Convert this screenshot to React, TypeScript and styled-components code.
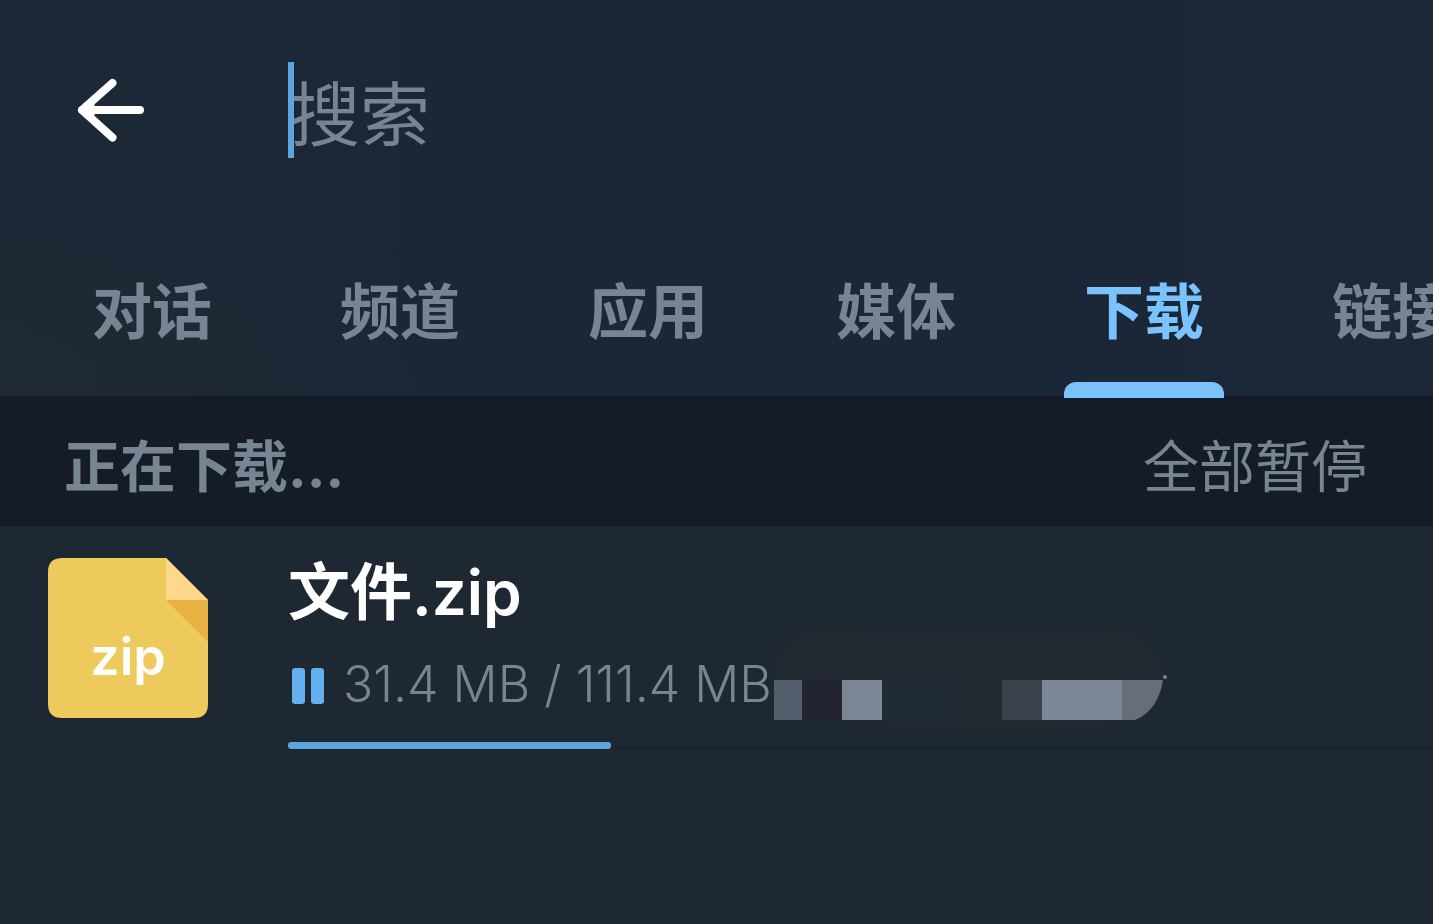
import React from "react";
import styled, { createGlobalStyle } from "styled-components";

const color = {
  page: "#1e2833",
  header: "#1b2737",
  section: "#151c27",
  muted: "#778592",
  accent: "#7ac3ff",
  progress: "#5ba6e0",
};

const GlobalStyle = createGlobalStyle`
  *, *::before, *::after { box-sizing: border-box; }
  body {
    margin: 0;
    background: ${color.page};
    font-family: Inter, "Noto Sans CJK SC", sans-serif;
    overflow-x: hidden;
  }
  button, input { font: inherit; border: 0; padding: 0; background: none; }
  button { cursor: pointer; }
`;

const Page = styled.div`
  min-height: 100vh;
  display: flex;
  flex-direction: column;
  background: ${color.page};
`;

const Header = styled.header`
  background:
    radial-gradient(ellipse 420px 180px at 0 100%, rgba(33, 42, 50, 0.7), transparent),
    linear-gradient(90deg, rgba(29, 41, 53, 0.7), transparent 40%, transparent 75%, rgba(29, 41, 54, 0.7)),
    ${color.header};
`;

const SearchBar = styled.div`
  display: flex;
  align-items: center;
  height: 220px;
  padding: 0 72px;
  gap: 136px;
`;

const BackButton = styled.button`
  display: flex;
  flex: none;
  color: #fff;
`;

const SearchField = styled.label`
  position: relative;
  flex: 1;
  display: flex;
  align-items: center;
  height: 96px;
`;

const Caret = styled.span`
  position: absolute;
  left: 0;
  top: 0;
  width: 6px;
  height: 100%;
  background: ${color.progress};
`;

const SearchInput = styled.input`
  width: 100%;
  height: 96px;
  padding-left: 2px;
  font-size: 70px;
  font-family: "Noto Sans CJK SC", sans-serif;
  font-weight: 400;
  color: #fff;
  outline: none;
  &::placeholder { color: ${color.muted}; opacity: 1; }
`;

const Tabs = styled.nav`
  display: flex;
  gap: 88px;
  height: 176px;
  padding-left: 72px;
  overflow-x: clip;
`;

const Tab = styled.button<{ $active: boolean }>`
  position: relative;
  flex: none;
  width: 160px;
  padding-bottom: 2px;
  font-family: "Noto Sans CJK SC", sans-serif;
  font-size: 60px;
  font-weight: 700;
  color: ${(p) => (p.$active ? color.accent : color.muted)};
  white-space: nowrap;
  &::after {
    content: "";
    display: ${(p) => (p.$active ? "block" : "none")};
    position: absolute;
    left: 0;
    right: 0;
    bottom: -2px;
    height: 16px;
    border-radius: 12px 12px 0 0;
    background: ${color.accent};
  }
`;

const SectionBar = styled.div`
  display: flex;
  align-items: center;
  justify-content: space-between;
  height: 130px;
  padding: 12px 66px 0 64px;
  background: ${color.section};
  color: ${color.muted};
`;

const SectionTitle = styled.h2`
  margin: 0;
  font-size: 56px;
  line-height: 80px;
  font-weight: 700;
`;

const PauseAll = styled.button`
  font-size: 56px;
  line-height: 80px;
  font-weight: 400;
  color: ${color.muted};
`;

const FileRow = styled.article`
  display: flex;
  gap: 80px;
  padding: 32px 0 0 48px;
`;

const FileIcon = styled.div`
  display: grid;
  flex: none;
  width: 160px;
  height: 160px;
  > * { grid-area: 1 / 1; }
`;

const FileType = styled.span`
  place-self: center;
  padding-top: 38px;
  font-size: 52px;
  line-height: 60px;
  font-weight: 600;
  color: #fff;
`;

const FileBody = styled.div`
  flex: 1;
  min-width: 0;
`;

const FileName = styled.h3`
  margin: 0;
  font-size: 62px;
  line-height: 70px;
  font-weight: 600;
  color: #fff;
`;

const FileDetails = styled.div`
  display: flex;
  align-items: center;
  height: 104px;
  padding-left: 4px;
  white-space: nowrap;
`;

const PauseButton = styled.button`
  display: flex;
  flex: none;
  padding-top: 12px;
  margin-right: 19px;
`;

const FileSize = styled.span`
  padding-top: 8px;
  margin-right: 2px;
  font-size: 50px;
  line-height: 60px;
  font-weight: 300;
  color: ${color.muted};
`;

const Track = styled.div`
  margin-top: 10px;
  height: 8px;
  background: linear-gradient(transparent 4px, #1b242d 4px);
`;

const Progress = styled.div`
  height: 7px;
  border-radius: 3px;
  background: ${color.progress};
`;

const tabs = ["对话", "频道", "应用", "媒体", "下载", "链接"];

const BackArrow = () => (
  <svg width="80" height="80" viewBox="0 0 80 80" fill="none" stroke="currentColor" strokeWidth="8" strokeLinecap="round" strokeLinejoin="round">
    <path d="M40.500 13 L10 40 L40.500 67.500 M10 40 H68" />
    <path d="M10 40 L21 33 V47 Z" fill="currentColor" strokeWidth="3" />
  </svg>
);

const ZipSheet = () => (
  <svg width="160" height="160" viewBox="0 0 160 160">
    <path d="M14 0 H118 L160 42 V146 Q160 160 146 160 H14 Q0 160 0 146 V14 Q0 0 14 0 Z" fill="#eec95c" />
    <path d="M118 42 H160 V84 Z" fill="#eab145" />
    <path d="M118 0 L160 42 H118 Z" fill="#ffd88b" />
  </svg>
);

const PauseIcon = () => (
  <svg width="32" height="36" viewBox="0 0 32 36" fill="#62b0ee">
    <rect width="13" height="36" rx="3" />
    <rect x="19" width="13" height="36" rx="3" />
  </svg>
);

const Redaction = () => (
  <svg width="394" height="104" viewBox="0 0 394 104" aria-hidden="true">
    <path d="M0 52 C2 20 18 1 52 1 C110 0 180 8 250 7 C290 6 310 0 345 1 C372 4 386 26 389 52 C389 74 378 87 361 92 C320 99 280 105 220 105 C150 103 100 92 0 92 Z" fill="#232931" />
    <rect y="52" width="28" height="40" fill="#525e6b" />
    <rect x="28" y="52" width="40" height="40" fill="#222431" />
    <rect x="68" y="52" width="40" height="40" fill="#7b8794" />
    <rect x="108" y="52" width="80" height="40" fill="#202b37" />
    <rect x="228" y="52" width="40" height="40" fill="#3b424b" />
    <rect x="268" y="52" width="80" height="40" fill="#7b8794" />
    <path d="M348 52 H389 C386 72 376 86 361 92 H348 Z" fill="#666e7c" />
    <circle cx="391" cy="49" r="2" fill={color.muted} />
  </svg>
);

export default function App() {
  const done = 31.4;
  const total = 111.4;
  return (
    <Page>
      <GlobalStyle />
      <Header>
        <SearchBar>
          <BackButton aria-label="返回">
            <BackArrow />
          </BackButton>
          <SearchField>
            <SearchInput type="text" placeholder="搜索" aria-label="搜索" />
            <Caret />
          </SearchField>
        </SearchBar>
        <Tabs>
          {tabs.map((t) => (
            <Tab key={t} $active={t === "下载"}>{t}</Tab>
          ))}
        </Tabs>
      </Header>
      <main>
        <SectionBar>
          <SectionTitle>正在下载...</SectionTitle>
          <PauseAll>全部暂停</PauseAll>
        </SectionBar>
        <FileRow>
          <FileIcon>
            <ZipSheet />
            <FileType>zip</FileType>
          </FileIcon>
          <FileBody>
            <FileName>文件.zip</FileName>
            <FileDetails>
              <PauseButton aria-label="暂停">
                <PauseIcon />
              </PauseButton>
              <FileSize>{done} MB / {total} MB</FileSize>
              <Redaction />
            </FileDetails>
            <Track role="progressbar" aria-label="文件.zip" aria-valuenow={done} aria-valuemin={0} aria-valuemax={total}>
              <Progress style={{ width: `${(done / total) * 100}%` }} />
            </Track>
          </FileBody>
        </FileRow>
      </main>
    </Page>
  );
}
